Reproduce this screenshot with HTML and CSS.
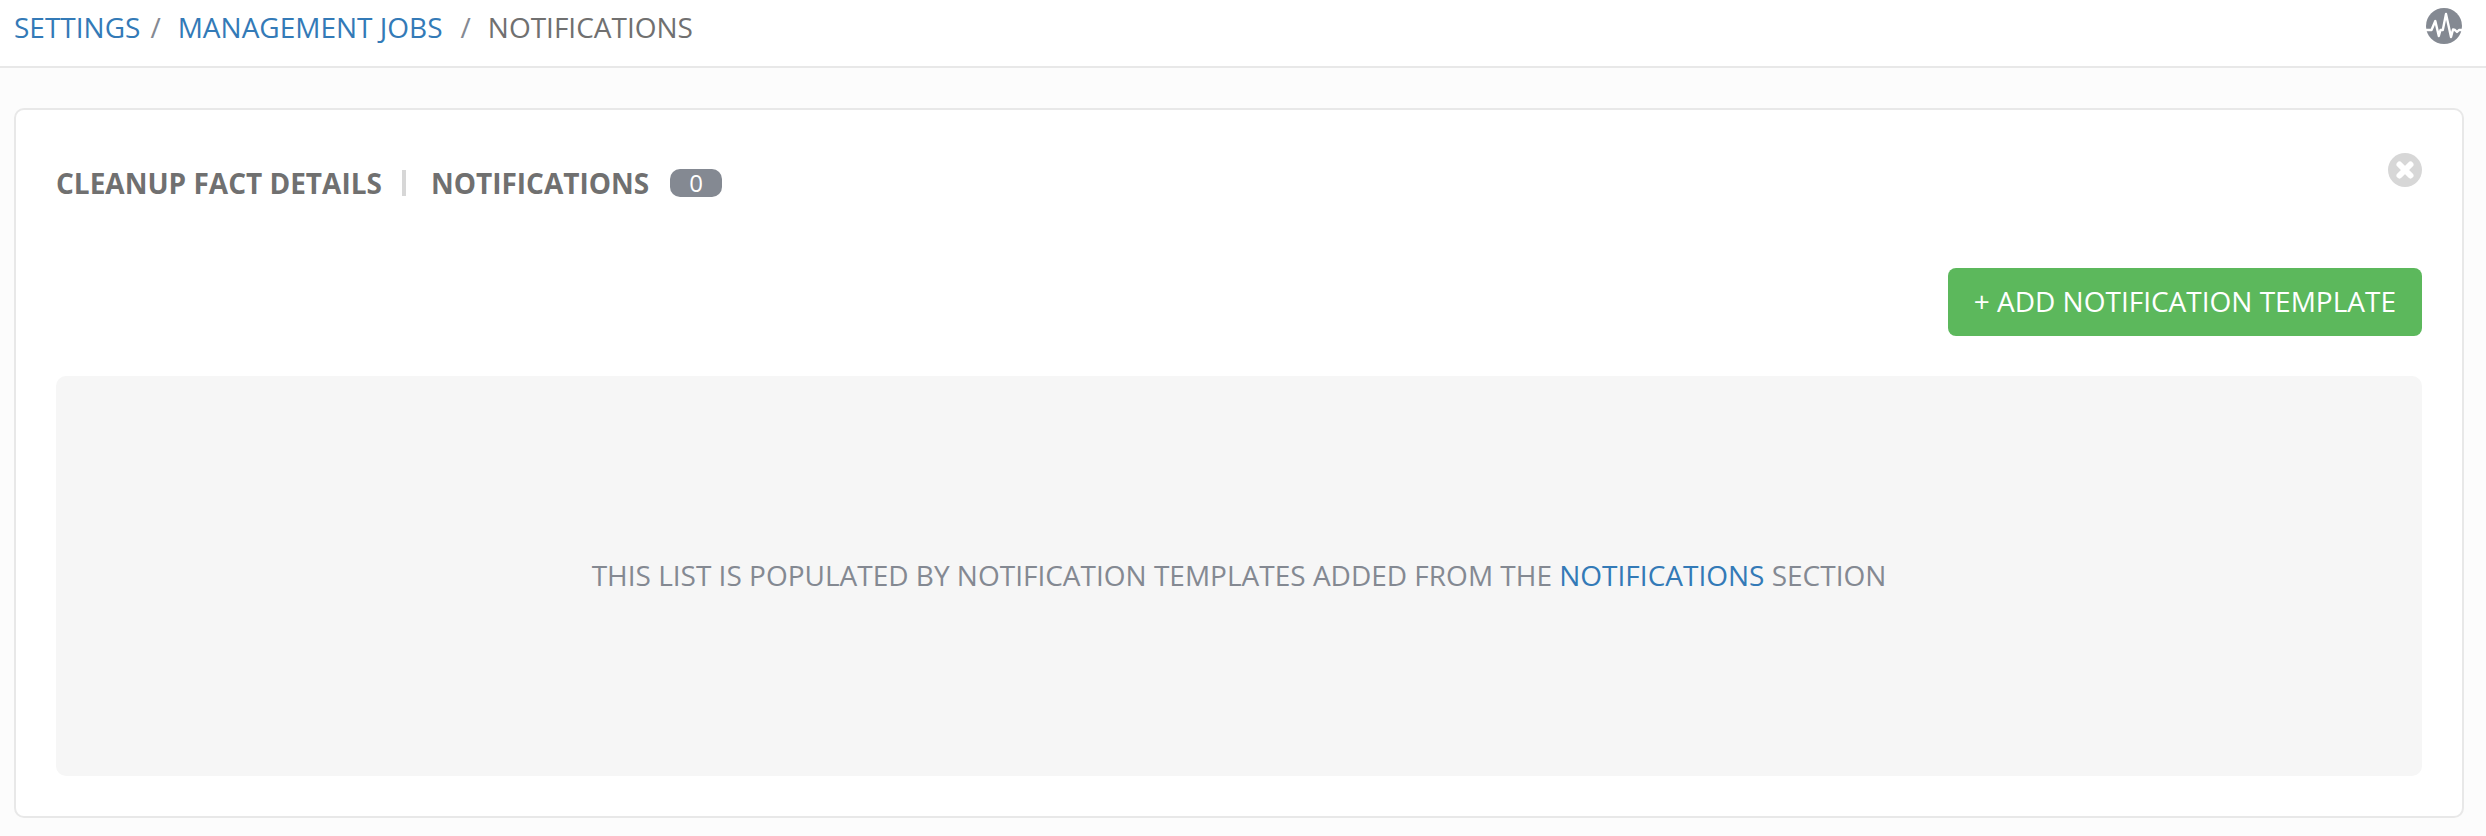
FILE: index.html
```html
<!DOCTYPE html>
<html lang="en">
<head>
<meta charset="utf-8">
<title>Management Jobs - Notifications</title>
<link rel="stylesheet" href="styles.css">
</head>
<body>
<header class="topbar">
  <nav aria-label="Breadcrumb">
    <ol class="crumbs">
      <li class="crumb"><a class="link" href="#">SETTINGS</a></li>
      <li class="crumb crumb-second"><a class="link" href="#">MANAGEMENT JOBS</a></li>
      <li class="crumb crumb-current" aria-current="page">NOTIFICATIONS</li>
    </ol>
  </nav>
  <button class="icon-button" type="button" aria-label="Activity stream">
    <svg class="activity" viewBox="0 0 36 36" aria-hidden="true">
      <circle cx="18" cy="18" r="18" fill="#848992"/>
      <path d="M0 22H5.500L9.300 13L12.800 28L14.500 22H16.800L20 6L25 29L27 21.500L29 22L31 24L33 22H36" fill="none" stroke="#fff" stroke-width="2.400" stroke-linejoin="round"/>
    </svg>
  </button>
</header>
<main class="panel">
  <div class="panel-head">
    <h1 class="title">
      <span>CLEANUP FACT DETAILS</span>
      <span class="divider"></span>
      <span>NOTIFICATIONS</span>
      <span class="badge">0</span>
    </h1>
    <button class="icon-button" type="button" aria-label="Close">
      <svg class="close" viewBox="0 0 34 34" aria-hidden="true">
        <circle cx="17" cy="17" r="17" fill="#d7d7d7"/>
        <path d="M11.500 11.500L22.500 22.500M22.500 11.500L11.500 22.500" stroke="#fff" stroke-width="6" stroke-linecap="round"/>
      </svg>
    </button>
  </div>
  <div class="actions">
    <button class="add" type="button">+ ADD NOTIFICATION TEMPLATE</button>
  </div>
  <p class="empty">THIS LIST IS POPULATED BY NOTIFICATION TEMPLATES ADDED FROM THE <a class="link" href="#">NOTIFICATIONS</a> SECTION</p>
</main>
</body>
</html>
```
FILE: styles.css
```css
* {
  box-sizing: border-box;
}

body {
  margin: 0;
  background: #fcfcfc;
  color: #707070;
  font: 28px/38px "Open Sans", "Noto Sans", sans-serif;
}

.link {
  color: #337ab7;
  text-decoration: none;
}

.topbar {
  display: flex;
  justify-content: space-between;
  align-items: flex-start;
  padding: 8px 24px 20px 14px;
  border-bottom: 2px solid #e8e8e8;
  background: #fff;
}

.crumbs {
  display: flex;
  margin: 0;
  padding: 0;
  list-style: none;
}

.crumb + .crumb::before {
  content: "/";
  padding: 0 17px 0 18px;
  color: #848992;
}

.crumb + .crumb-second::before {
  padding-left: 10px;
}

.icon-button {
  display: flex;
  padding: 0;
  border: 0;
  background: none;
  cursor: pointer;
}

.activity {
  width: 36px;
  height: 36px;
}

.close {
  width: 34px;
  height: 34px;
}

.panel {
  margin: 40px 22px 18px 14px;
  padding: 40px;
  border: 2px solid #e8e8e8;
  border-radius: 10px;
  background: #fff;
}

.panel-head {
  display: flex;
  justify-content: space-between;
  align-items: flex-start;
  padding-top: 3px;
}

.title {
  display: flex;
  align-items: center;
  margin: 0;
  padding-top: 11px;
  font-size: 28px;
  line-height: 38px;
}

.divider {
  width: 4px;
  height: 26px;
  margin: 0 25px 0 20px;
  background: #d7d7d7;
}

.badge {
  min-width: 52px;
  margin-left: 21px;
  border-radius: 10px;
  background: #848992;
  color: #fff;
  font-size: 24px;
  font-weight: 400;
  line-height: 28px;
  text-align: center;
}

.actions {
  display: flex;
  justify-content: flex-end;
  padding: 66px 0 40px;
}

.add {
  padding: 14px 26px 16px;
  border: 0;
  border-radius: 8px;
  background: #5cb85c;
  color: #fff;
  font: inherit;
  cursor: pointer;
}

.empty {
  margin: 0;
  padding: 180px 40px 182px;
  border-radius: 10px;
  background: #f6f6f6;
  color: #848992;
  text-align: center;
}
```
